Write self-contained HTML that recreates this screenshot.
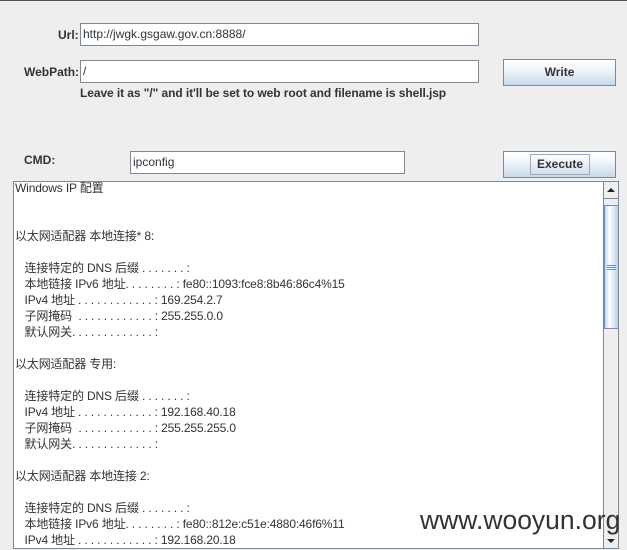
<!DOCTYPE html>
<html><head><meta charset="utf-8"><style>
*{margin:0;padding:0;box-sizing:border-box}
body{width:627px;height:550px;background:#eeeeee;position:relative;overflow:hidden;font-family:"Liberation Sans","Noto Sans CJK SC",sans-serif;font-size:12px;color:#333}
.abs{position:absolute}
.lbl{font-weight:bold;color:#333;font-size:12px}
.fld{background:#fff;border:1px solid #7a8a99;font-size:12px;padding-left:2px;line-height:20px;color:#333}
.btn{border:1px solid #7a8a99;background:linear-gradient(#ffffff 0%,#f3f7fb 35%,#c9d9e8 100%);font-weight:bold;font-size:12px;text-align:center;color:#333}
pre{font-family:"Liberation Sans","Noto Sans CJK SC",sans-serif;font-size:12px;line-height:16px;color:#333;letter-spacing:-0.15px}
</style></head><body>
<div class="abs" style="left:0;top:0;width:627px;height:1px;background:#555"></div>
<div class="abs lbl" style="left:58px;top:28px">Url:</div>
<div class="abs fld" style="left:80px;top:23px;width:399px;height:23px">http://jwgk.gsgaw.gov.cn:8888/</div>
<div class="abs lbl" style="left:24px;top:65px">WebPath:</div>
<div class="abs fld" style="left:80px;top:60px;width:399px;height:23px">/</div>
<div class="abs btn" style="left:503px;top:59px;width:113px;height:27px;line-height:25px">Write</div>
<div class="abs lbl" style="left:80px;top:86px;letter-spacing:-0.08px">Leave it as "/" and it'll be set to web root and filename is shell.jsp</div>
<div class="abs lbl" style="left:24px;top:153px">CMD:</div>
<div class="abs fld" style="left:130px;top:151px;width:275px;height:23px">ipconfig</div>
<div class="abs btn" style="left:503px;top:151px;width:113px;height:27px;">
  <div style="position:absolute;left:26px;top:2px;width:60px;height:21px;border:1px solid #9aaabb;line-height:19px">Execute</div>
</div>
<div class="abs" style="left:13px;top:181px;width:606px;height:368px;border:1px solid #7a8a99;background:#fff;overflow:hidden">
<pre style="position:absolute;left:1px;top:-2px">Windows IP 配置


以太网适配器 本地连接* 8:

   连接特定的 DNS 后缀 . . . . . . . :
   本地链接 IPv6 地址. . . . . . . . : fe80::1093:fce8:8b46:86c4%15
   IPv4 地址 . . . . . . . . . . . . : 169.254.2.7
   子网掩码  . . . . . . . . . . . . : 255.255.0.0
   默认网关. . . . . . . . . . . . . :

以太网适配器 专用:

   连接特定的 DNS 后缀 . . . . . . . :
   IPv4 地址 . . . . . . . . . . . . : 192.168.40.18
   子网掩码  . . . . . . . . . . . . : 255.255.255.0
   默认网关. . . . . . . . . . . . . :

以太网适配器 本地连接 2:

   连接特定的 DNS 后缀 . . . . . . . :
   本地链接 IPv6 地址. . . . . . . . : fe80::812e:c51e:4880:46f6%11
   IPv4 地址 . . . . . . . . . . . . : 192.168.20.18</pre>
<div class="abs" style="left:589px;top:0;width:16px;height:368px;background:#eeeeee;border-left:1px solid #7a8a99">
  <div class="abs" style="left:0;top:0;width:15px;height:17px;border-bottom:1px solid #7a8a99"></div>
  <div class="abs" style="left:3px;top:6px;width:0;height:0;border-left:4px solid transparent;border-right:4px solid transparent;border-bottom:4px solid #222"></div>
  <div class="abs" style="left:0;top:23px;width:15px;height:124px;border:1px solid #6a8ed6;background:linear-gradient(90deg,#c5d6ee,#ffffff 35%,#dbe6f3 70%,#b9cde6)"></div>
  <div class="abs" style="left:3px;top:83px;width:9px;height:1px;background:#6a8ed6"></div>
  <div class="abs" style="left:3px;top:85px;width:9px;height:1px;background:#6a8ed6"></div>
  <div class="abs" style="left:3px;top:87px;width:9px;height:1px;background:#6a8ed6"></div>
  <div class="abs" style="left:3px;top:357px;width:0;height:0;border-left:4px solid transparent;border-right:4px solid transparent;border-top:4px solid #222"></div>
</div>
</div>
<div class="abs" style="left:420px;top:505px;font-size:26.5px;color:#333;font-family:'Liberation Sans',sans-serif">www.wooyun.org</div>
</body></html>
